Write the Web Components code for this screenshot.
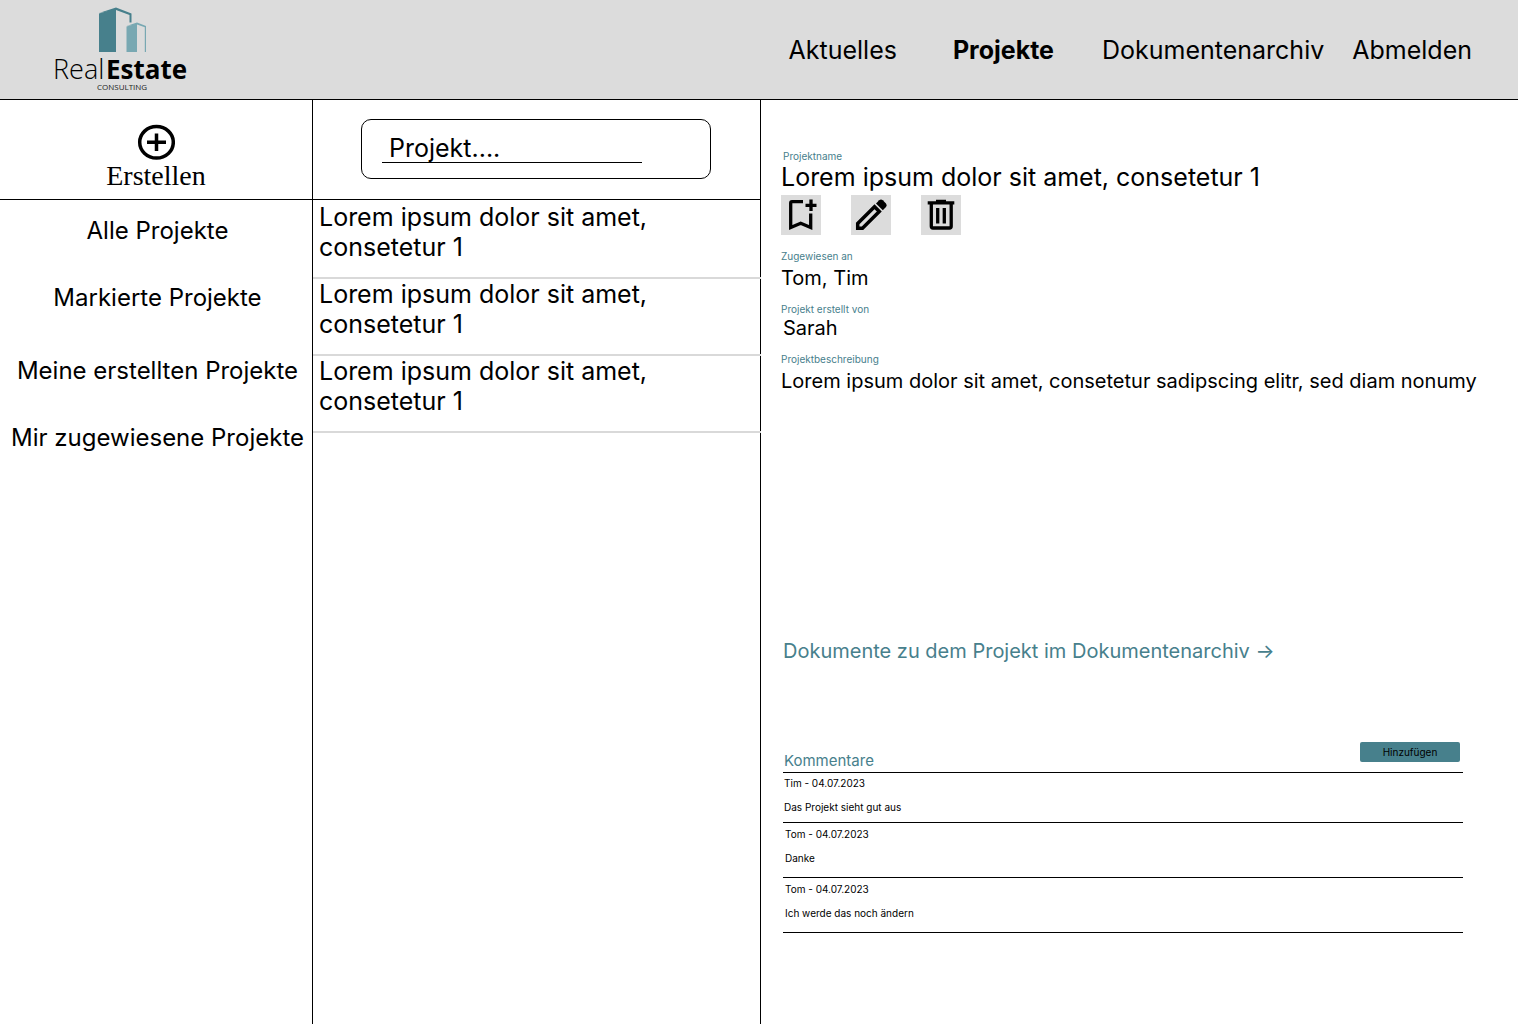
<!DOCTYPE html>
<html lang="de">
<head>
<meta charset="utf-8">
<title>RealEstate Consulting – Projekte</title>
<style>
  html { height: 100%; }
  body { margin: 0; min-height: 100%; display: flex; font-family: Inter, "Liberation Sans", sans-serif; color: #000; background: #fff; }
  re-app { flex: 1; }
</style>
</head>
<body>
<re-app>
  <re-header slot="header">
    <re-nav-link href="#aktuelles">Aktuelles</re-nav-link>
    <re-nav-link href="#projekte" active>Projekte</re-nav-link>
    <re-nav-link href="#archiv">Dokumentenarchiv</re-nav-link>
    <re-nav-link href="#abmelden">Abmelden</re-nav-link>
  </re-header>

  <re-sidebar slot="sidebar">
    <re-filter-group>
      <re-filter href="#alle">Alle Projekte</re-filter>
      <re-filter href="#markierte">Markierte Projekte</re-filter>
    </re-filter-group>
    <re-filter-group>
      <re-filter href="#erstellte">Meine erstellten Projekte</re-filter>
      <re-filter href="#zugewiesene">Mir zugewiesene Projekte</re-filter>
    </re-filter-group>
  </re-sidebar>

  <re-project-list slot="list">
    <re-project-item href="#p1">Lorem ipsum dolor sit amet, consetetur 1</re-project-item>
    <re-project-item href="#p2">Lorem ipsum dolor sit amet, consetetur 1</re-project-item>
    <re-project-item href="#p3">Lorem ipsum dolor sit amet, consetetur 1</re-project-item>
  </re-project-list>

  <re-project-detail slot="detail">
    <span slot="name">Lorem ipsum dolor sit amet, consetetur 1</span>
    <re-field label="Zugewiesen an">Tom, Tim</re-field>
    <re-field label="Projekt erstellt von" tight>Sarah</re-field>
    <re-field label="Projektbeschreibung" long>Lorem ipsum dolor sit amet, consetetur sadipscing elitr, sed diam nonumy</re-field>
    <re-comments slot="comments">
      <re-comment meta="Tim - 04.07.2023">Das Projekt sieht gut aus</re-comment>
      <re-comment meta="Tom - 04.07.2023">Danke</re-comment>
      <re-comment meta="Tom - 04.07.2023">Ich werde das noch ändern</re-comment>
    </re-comments>
  </re-project-detail>
</re-app>

<script>
const define = (name, render) => customElements.define(name, class extends HTMLElement {
  constructor() {
    super();
    this.attachShadow({ mode: 'open' });
  }
  connectedCallback() {
    const t = document.createElement('template');
    t.innerHTML = '<style>*{box-sizing:border-box}a{color:inherit;text-decoration:none}button{font:inherit;color:inherit;border:0;padding:0;cursor:pointer}</style>' + render(this);
    this.shadowRoot.replaceChildren(t.content.cloneNode(true));
  }
});

define('re-app', () => `
  <style>
    :host { display: flex; flex-direction: column; --teal: #47808c; --grey: #dcdcdc; }
    main { flex: 1; display: grid; grid-template-columns: minmax(0, 313fr) minmax(0, 448fr) minmax(0, 757fr); }
  </style>
  <slot name="header"></slot>
  <main><slot name="sidebar"></slot><slot name="list"></slot><slot name="detail"></slot></main>`);

define('re-logo', () => `
  <style>
    :host { display: block; }
    svg { display: block; }
  </style>
  <svg width="140" height="98" viewBox="0 0 140 98" role="img" aria-label="RealEstate Consulting">
    <path fill="#47808c" d="M46 13.500 63 8.500V52H46Z"/>
    <path fill="#47808c" d="M46 13 63 7.500l15.500 6v9H76.500V15L63 10Z"/>
    <path fill="#78a8b2" d="M73.500 26.500 84 23.500V52H73.500Z"/>
    <path fill="#78a8b2" d="M73.500 26 84 22.500l9 3.500V52H91.800V27.300L84 24.500Z"/>
    <text x="0" y="79" font-family="Open Sans" font-weight="300" font-size="27">Real</text>
    <text x="53" y="79" font-family="Open Sans" font-weight="700" font-size="26">Estate</text>
    <text x="44" y="90" font-family="Open Sans" font-size="8" fill="#222">CONSULTING</text>
  </svg>`);

define('re-header', () => `
  <style>
    :host { display: block; }
    header { display: flex; justify-content: space-between; height: 100px; padding: 0 46px 0 53px; background: var(--grey); border-bottom: 1px solid #000; }
    nav { display: flex; align-items: center; gap: 28px; }
  </style>
  <header><re-logo></re-logo><nav aria-label="Hauptmenü"><slot></slot></nav></header>`);

define('re-nav-link', el => `
  <style>
    :host { display: block; font-size: 25px; line-height: 30px; white-space: nowrap; }
    :host([active]) { font-weight: 700; padding: 0 20px 0 28px; }
  </style>
  <a href="${el.getAttribute('href')}"${el.hasAttribute('active') ? ' aria-current="page"' : ''}><slot></slot></a>`);

define('re-sidebar', () => `
  <style>
    :host { display: block; border-right: 1px solid #000; }
    .create { display: flex; justify-content: center; align-items: flex-start; height: 100px; padding-top: 24px; border-bottom: 1px solid #000; }
    button { display: flex; flex-direction: column; align-items: center; background: none; font: 28px/32px "Liberation Serif", serif; }
    nav { display: flex; flex-direction: column; gap: 43px; padding: 16px 0 0 3px; }
  </style>
  <div class="create"><button type="button">
    <svg width="38" height="36" viewBox="0 0 38 36" fill="none" stroke="#000" stroke-width="3.500"><ellipse cx="19.500" cy="18.300" rx="16.800" ry="15.800"/><path d="M19.500 9.500v17.600M10 18.300h19"/></svg>
    Erstellen</button></div>
  <nav aria-label="Projektfilter"><slot></slot></nav>`);

define('re-filter-group', () => `
  <style>:host { display: flex; flex-direction: column; gap: 37px; }</style><slot></slot>`);

define('re-filter', el => `
  <style>:host { display: flex; justify-content: center; font-size: 24px; line-height: 30px; white-space: nowrap; }</style>
  <a href="${el.getAttribute('href')}"><slot></slot></a>`);

define('re-project-list', () => `
  <style>
    :host { display: block; border-right: 1px solid #000; }
    form { height: 100px; padding: 19px 49px 0 48px; border-bottom: 1px solid #000; }
    .box { display: block; max-width: 350px; height: 60px; padding: 13px 20px; border: 1px solid #000; border-radius: 10px; }
    input { display: block; width: 260px; max-width: 100%; height: 30px; padding: 0 7px; border: 0; border-bottom: 1px solid #000; background: none; font: inherit; font-size: 25px; color: #000; outline: 0; }
    input::placeholder { color: #000; opacity: 1; }
    .rows { padding-top: 2px; }
  </style>
  <form role="search"><label class="box"><input type="text" aria-label="Projekt suchen" placeholder="Projekt...."></label></form>
  <div class="rows"><slot></slot></div>`);

define('re-project-item', el => `
  <style>
    :host { display: block; margin-right: -1px; border-bottom: 2px solid #d9d9d9; font-size: 25px; line-height: 30px; }
    a { display: block; max-width: 400px; padding: 0 6px 15px; }
  </style>
  <a href="${el.getAttribute('href')}"><slot></slot></a>`);

define('re-project-detail', () => `
  <style>
    :host { display: block; padding: 50px 40px 50px 20px; }
    .label { padding-left: 2px; color: var(--teal); font-size: 10px; line-height: 12px; }
    h1 { margin: 0; font-size: 25px; line-height: 30px; font-weight: 400; }
    .tools { display: flex; gap: 30px; padding: 3px 0 15px; }
    .tools button { width: 40px; height: 40px; background: var(--grey); }
    .tools svg { display: block; }
    .fields { display: flex; flex-direction: column; gap: 13px; }
    .docs { display: inline-block; padding-left: 2px; color: var(--teal); font-size: 20px; line-height: 24px; }
  </style>
  <div class="label">Projektname</div>
  <h1><slot name="name"></slot></h1>
  <div class="tools">
    <button type="button" aria-label="Projekt markieren"><svg width="40" height="40" fill="none" stroke="#000" stroke-width="3.300"><path d="M22 6.700H11Q9.700 6.700 9.700 8V32.500L19.700 28.200 29.700 32.500V18.500M30 4.500v11.500M24.500 10.300h11"/></svg></button>
    <button type="button" aria-label="Projekt bearbeiten"><svg width="40" height="40"><path d="M6.700 33.300V28.500L23.500 11.700 28.300 16.500 11.500 33.300Z" fill="none" stroke="#000" stroke-width="3.500"/><path d="M25 8.500 28.200 5.300Q30 3.700 31.800 5.300L35 8.500Q36.500 10.300 35 12L31.800 15.200Z"/></svg></button>
    <button type="button" aria-label="Projekt löschen"><svg width="40" height="40" fill="none" stroke="#000" stroke-width="3.300"><path d="M6.700 7.900h26.600M15 6.500h10M10.300 8V31.300Q10.300 33 12 33H28.500Q30.200 33 30.200 31.300V8M16.700 13v15.500M23.300 13v15.500"/></svg></button>
  </div>
  <div class="fields"><slot></slot></div>
  <a class="docs" href="#archiv">Dokumente zu dem Projekt im Dokumentenarchiv -&gt;</a>
  <slot name="comments"></slot>`);

define('re-field', el => `
  <style>
    :host { display: block; }
    dl, dd { margin: 0; }
    dt { color: var(--teal); font-size: 10px; line-height: 12px; }
    dd { padding-top: 4px; font-size: 20px; line-height: 24px; }
    :host([tight]) dd { padding: 1px 0 0 2px; }
    :host([long]) dd { min-height: 274px; }
  </style>
  <dl><dt>${el.getAttribute('label')}</dt><dd><slot></slot></dd></dl>`);

define('re-comments', () => `
  <style>
    :host { display: block; margin: 79px 15px 0 2px; }
    .head { display: flex; justify-content: space-between; align-items: flex-start; height: 31px; padding-right: 3px; border-bottom: 1px solid #000; }
    h2 { margin: 0; padding: 10px 0 0 1px; color: var(--teal); font-size: 15px; line-height: 18px; font-weight: 400; }
    button { width: 100px; height: 20px; border-radius: 2px; background: var(--teal); font-size: 10px; }
  </style>
  <section><div class="head"><h2>Kommentare</h2><button type="button">Hinzufügen</button></div><slot></slot></section>`);

define('re-comment', el => `
  <style>
    :host { display: block; padding: 5px 2px 13px; border-bottom: 1px solid #000; font-size: 10px; line-height: 12px; }
    :host(:first-child) { padding: 4px 1px 9px; }
    p { margin: 0; }
    p + p { margin-top: 12px; }
  </style>
  <p>${el.getAttribute('meta')}</p><p><slot></slot></p>`);
</script>
</body>
</html>
